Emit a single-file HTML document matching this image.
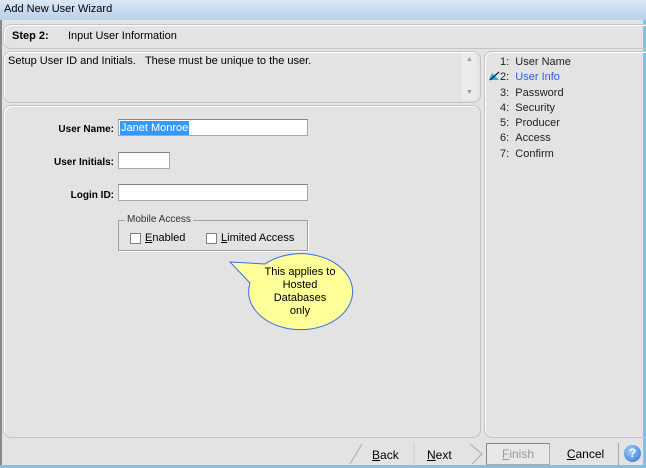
<!DOCTYPE html>
<html><head><style>
*{margin:0;padding:0;box-sizing:border-box}
body{width:646px;height:468px;background:#e3e3e3;font-family:"Liberation Sans",sans-serif;font-size:11px;color:#000;position:relative;overflow:hidden}
.a{position:absolute}
.title{left:0;top:0;width:646px;height:20px;background:linear-gradient(#dbe8f5,#b9d1ea);font-size:11px;padding:3px 4px;color:#000}
.panel{position:absolute;border:1px solid #c4c4c4;border-radius:8px;box-shadow:inset 1px 1px 0 #fff}
input{position:absolute;height:17px;border:1px solid #a8a8a8;border-top-color:#828282;background:#fff;font:12px "Liberation Sans",sans-serif}
.lbl{position:absolute;font-weight:bold;font-size:10px;text-align:right;width:110px}
.cb{position:absolute;width:11px;height:11px;border:1px solid #808080;background:#fff}
</style></head><body>
<div class="a title">Add New User Wizard</div>
<div class="a" style="left:0;top:20px;width:2px;height:448px;background:#8a8784"></div>
<div class="a" style="right:0;top:20px;width:3px;height:448px;background:#7fc3e4"></div>
<div class="a" style="left:0;top:465px;width:646px;height:3px;background:#7fc3e4"></div>

<div class="panel" style="left:3px;top:24px;width:650px;height:25px"></div>
<div class="a" style="left:12px;top:30px;font-size:11px;font-weight:bold">Step 2:</div>
<div class="a" style="left:68px;top:30px;font-size:11px">Input User Information</div>

<div class="panel" style="left:3px;top:51px;width:478px;height:52px"></div>
<div class="a" style="left:8px;top:55px;font-size:11px">Setup User ID and Initials.&nbsp;&nbsp;&nbsp;These must be unique to the user.</div>
<div class="a" style="left:462px;top:53px;width:15px;height:47px;background:#ebebeb"></div>
<div class="a" style="left:466px;top:56px;font-size:7px;color:#999">▲</div>
<div class="a" style="left:466px;top:89px;font-size:7px;color:#999">▼</div>

<div class="panel" style="left:3px;top:105px;width:478px;height:333px"></div>
<div class="panel" style="left:484px;top:51px;width:170px;height:387px"></div>

<div class="lbl" style="left:4px;top:124px">User Name:</div>
<input style="left:118px;top:119px;width:190px" value="">
<div class="a" style="left:120px;top:121px;background:#3399ff;color:#fff;font-size:11px;padding:0 1px;line-height:14px">Janet Monroe</div>
<div class="lbl" style="left:4px;top:157px">User Initials:</div>
<input style="left:118px;top:152px;width:52px">
<div class="lbl" style="left:4px;top:190px">Login ID:</div>
<input style="left:118px;top:184px;width:190px">

<div class="a" style="left:118px;top:220px;width:190px;height:31px;border:1px solid #a0a0a0;box-shadow:1px 1px 0 #fff"></div>
<div class="a" style="left:125px;top:214px;background:#e3e3e3;padding:0 2px;font-size:10px;color:#333">Mobile Access</div>
<div class="cb" style="left:130px;top:233px"></div>
<div class="a" style="left:145px;top:232px;font-size:11px"><u>E</u>nabled</div>
<div class="cb" style="left:206px;top:233px"></div>
<div class="a" style="left:221px;top:232px;font-size:11px"><u>L</u>imited Access</div>

<svg class="a" style="left:0;top:0" width="646" height="468">
<path d="M230 262 L265 264 A52 38 0 1 1 250 283 Z" fill="#ffff9a" stroke="#3a6df0" stroke-width="1"/>
</svg>
<div class="a" style="left:255px;top:266px;width:90px;text-align:center;font-size:11px;line-height:13px">This applies to<br>Hosted<br>Databases<br>only</div>

<div class="a" style="left:500px;top:55px;font-size:11px;line-height:15.3px;color:#222">
<div>1:&nbsp;&nbsp;User Name</div>
<div>2:&nbsp;&nbsp;<span style="color:#2a5ee8">User Info</span></div>
<div>3:&nbsp;&nbsp;Password</div>
<div>4:&nbsp;&nbsp;Security</div>
<div>5:&nbsp;&nbsp;Producer</div>
<div>6:&nbsp;&nbsp;Access</div>
<div>7:&nbsp;&nbsp;Confirm</div>
</div>
<svg class="a" style="left:489px;top:71px" width="12" height="10"><path d="M0 9 L3 2 L10 9 Z" fill="#25aee0"/><path d="M1 9 L10 1" stroke="#222" stroke-width="1.2"/></svg>

<svg class="a" style="left:348px;top:442px" width="68" height="24"><path d="M14 2 L2 22" stroke="#aaa" fill="none"/><path d="M66 0 L66 24" stroke="#ccc"/></svg>
<div class="a" style="left:372px;top:448px;font-size:12px"><u>B</u>ack</div>
<svg class="a" style="left:414px;top:442px" width="70" height="24"><path d="M56 2 L68 12 L58 22" stroke="#aaa" fill="none"/></svg>
<div class="a" style="left:427px;top:448px;font-size:12px"><u>N</u>ext</div>
<div class="a" style="left:486px;top:443px;width:64px;height:22px;border:1px solid #aaa;border-top-color:#888;border-left-color:#888;background:#e8e8e8;color:#999;font-size:12px;text-align:center;line-height:20px"><u>F</u>inish</div>
<div class="a" style="left:553px;top:443px;width:66px;height:22px;border-right:1px solid #aaa;font-size:12px;text-align:center;line-height:22px"><u>C</u>ancel</div>
<div class="a" style="left:624px;top:445px;width:17px;height:17px;border-radius:50%;background:radial-gradient(circle at 40% 35%,#9cd0ff,#2a6fd0);color:#fff;font-weight:bold;font-size:12px;text-align:center;line-height:17px">?</div>
</body></html>
